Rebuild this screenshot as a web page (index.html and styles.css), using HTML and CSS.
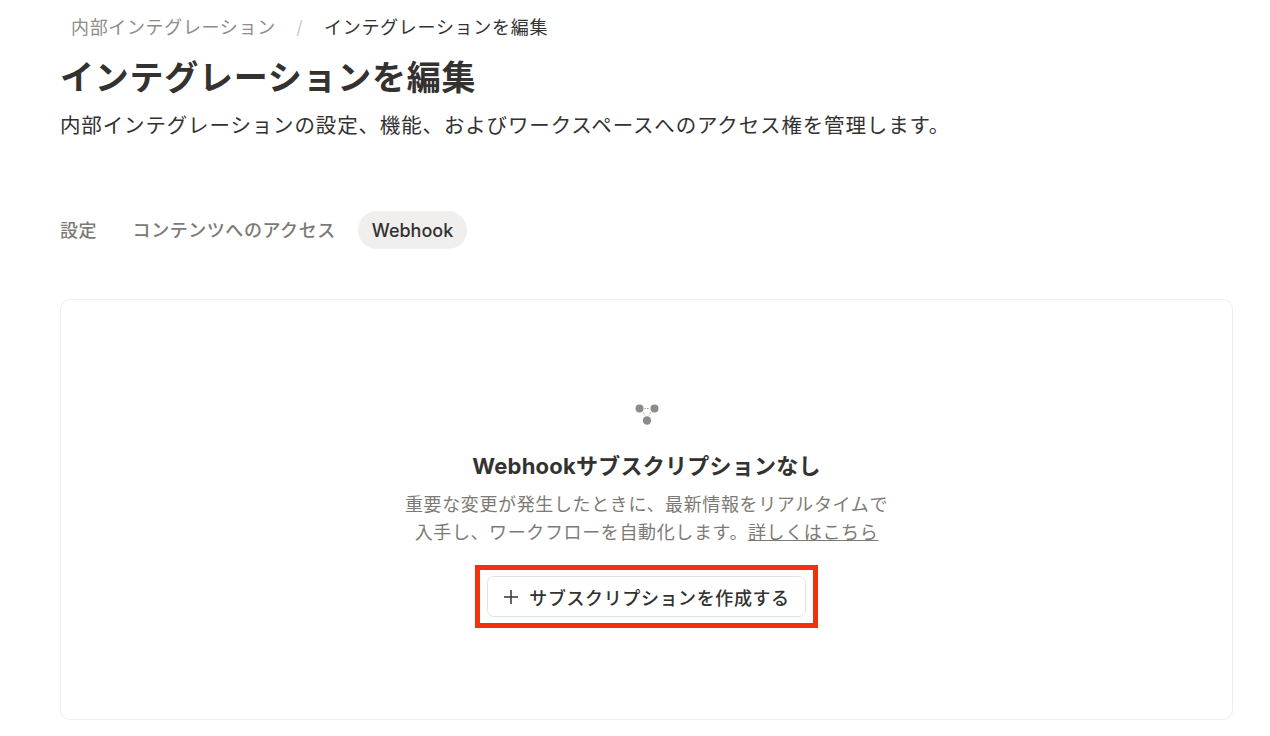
FILE: index.html
```html
<!DOCTYPE html>
<html lang="ja">
<head>
<meta charset="utf-8">
<title>インテグレーションを編集</title>
<link rel="stylesheet" href="styles.css">
</head>
<body>
<main class="page">
  <nav class="crumbs">
    <span class="crumb-parent">内部インテグレーション</span>
    <span class="crumb-sep">/</span>
    <span class="crumb-current">インテグレーションを編集</span>
  </nav>
  <h1 class="title">インテグレーションを編集</h1>
  <p class="subtitle">内部インテグレーションの設定、機能、およびワークスペースへのアクセス権を管理します。</p>
  <div class="tabs">
    <span class="tab tab-first">設定</span>
    <span class="tab">コンテンツへのアクセス</span>
    <span class="tab tab-active">Webhook</span>
  </div>
  <section class="card">
    <svg class="hook-icon" width="26" height="26" viewBox="0 0 26 26" aria-hidden="true">
      <circle cx="5.5" cy="5.5" r="4" fill="#8f8b87"/>
      <circle cx="20.5" cy="5.5" r="4" fill="#8f8b87"/>
      <circle cx="13" cy="17.5" r="4.2" fill="#8f8b87"/>
      <path d="M10.5 5.5h5M9.5 9.5l1.4 3M16.5 9.5l-1.4 3" stroke="#a5a19d" stroke-width="1" stroke-dasharray="1.5 1" fill="none"/>
    </svg>
    <h2 class="empty-title">Webhookサブスクリプションなし</h2>
    <p class="empty-text">重要な変更が発生したときに、最新情報をリアルタイムで<br>入手し、ワークフローを自動化します。<a class="empty-link" href="#">詳しくはこちら</a></p>
    <div class="highlight">
      <button class="add-button" type="button">
        <svg width="16" height="16" viewBox="0 0 16 16" aria-hidden="true"><path d="M8 1v14M1 8h14" stroke="#37352f" stroke-width="1.5" fill="none"/></svg>
        <span>サブスクリプションを作成する</span>
      </button>
    </div>
  </section>
</main>
</body>
</html>
```
FILE: styles.css
```css
* { box-sizing: border-box; }
html, body { margin: 0; padding: 0; background: #fff; }
body {
  font-family: Inter, "Noto Sans CJK JP", sans-serif;
  color: #333231;
  height: 736px;
  overflow: hidden;
}
.page { padding: 0 37px 0 60px; }
.crumbs {
  display: flex;
  align-items: center;
  height: 56px;
  padding: 0 0 0 11px;
  font-size: 18px;
  letter-spacing: 0.65px;
  line-height: 56px;
}
.crumb-parent { color: #8f8b87; }
.crumb-sep { color: #cfcdca; margin: 0 20.5px; font-size: 18px; }
.crumb-current { color: #333231; letter-spacing: 0.72px; }
.title {
  margin: 0;
  font-size: 34px;
  line-height: 44px;
  font-weight: 700;
  letter-spacing: 0.75px;
}
.subtitle {
  margin: 8px 0 0;
  font-size: 20.5px;
  line-height: 36px;
  letter-spacing: 0.85px;
}
.tabs {
  display: flex;
  align-items: center;
  gap: 22px;
  margin-top: 67px;
  height: 38px;
}
.tab {
  font-size: 18px;
  font-weight: 500;
  letter-spacing: 0.55px;
  color: #7d7a75;
  padding-bottom: 2px;
}
.tab-first { margin-right: 13.5px; }
.tab-active {
  height: 38px;
  line-height: 40px;
  padding: 0 14px;
  border-radius: 19px;
  background: #f0efed;
  color: #333231;
  letter-spacing: 0;
}
.card {
  display: flex;
  flex-direction: column;
  align-items: center;
  margin-top: 50px;
  height: 421px;
  border: 1px solid #efeeec;
  border-radius: 10px;
  padding-top: 103px;
}
.hook-icon { display: block; }
.empty-title {
  margin: 21px 0 0;
  font-size: 22px;
  line-height: 32px;
  font-weight: 700;
  letter-spacing: 0.25px;
}
.empty-text {
  margin: 9px 0 0;
  text-align: center;
  font-size: 18px;
  line-height: 27.5px;
  letter-spacing: 0.62px;
  color: #7d7a75;
}
.empty-link { color: #7d7a75; text-decoration: underline; }
.highlight {
  margin-top: 19px;
  padding: 6px 7px;
  border: 5px solid #f3300b;
  width: 343px;
  height: 63px;
}
.add-button {
  display: flex;
  align-items: center;
  justify-content: center;
  gap: 10px;
  width: 100%;
  height: 100%;
  padding: 0;
  background: #fff;
  border: 1px solid #e4e3e1;
  border-radius: 7px;
  font-family: inherit;
  font-size: 18px;
  font-weight: 500;
  letter-spacing: 0.6px;
  color: #333231;
}
```
